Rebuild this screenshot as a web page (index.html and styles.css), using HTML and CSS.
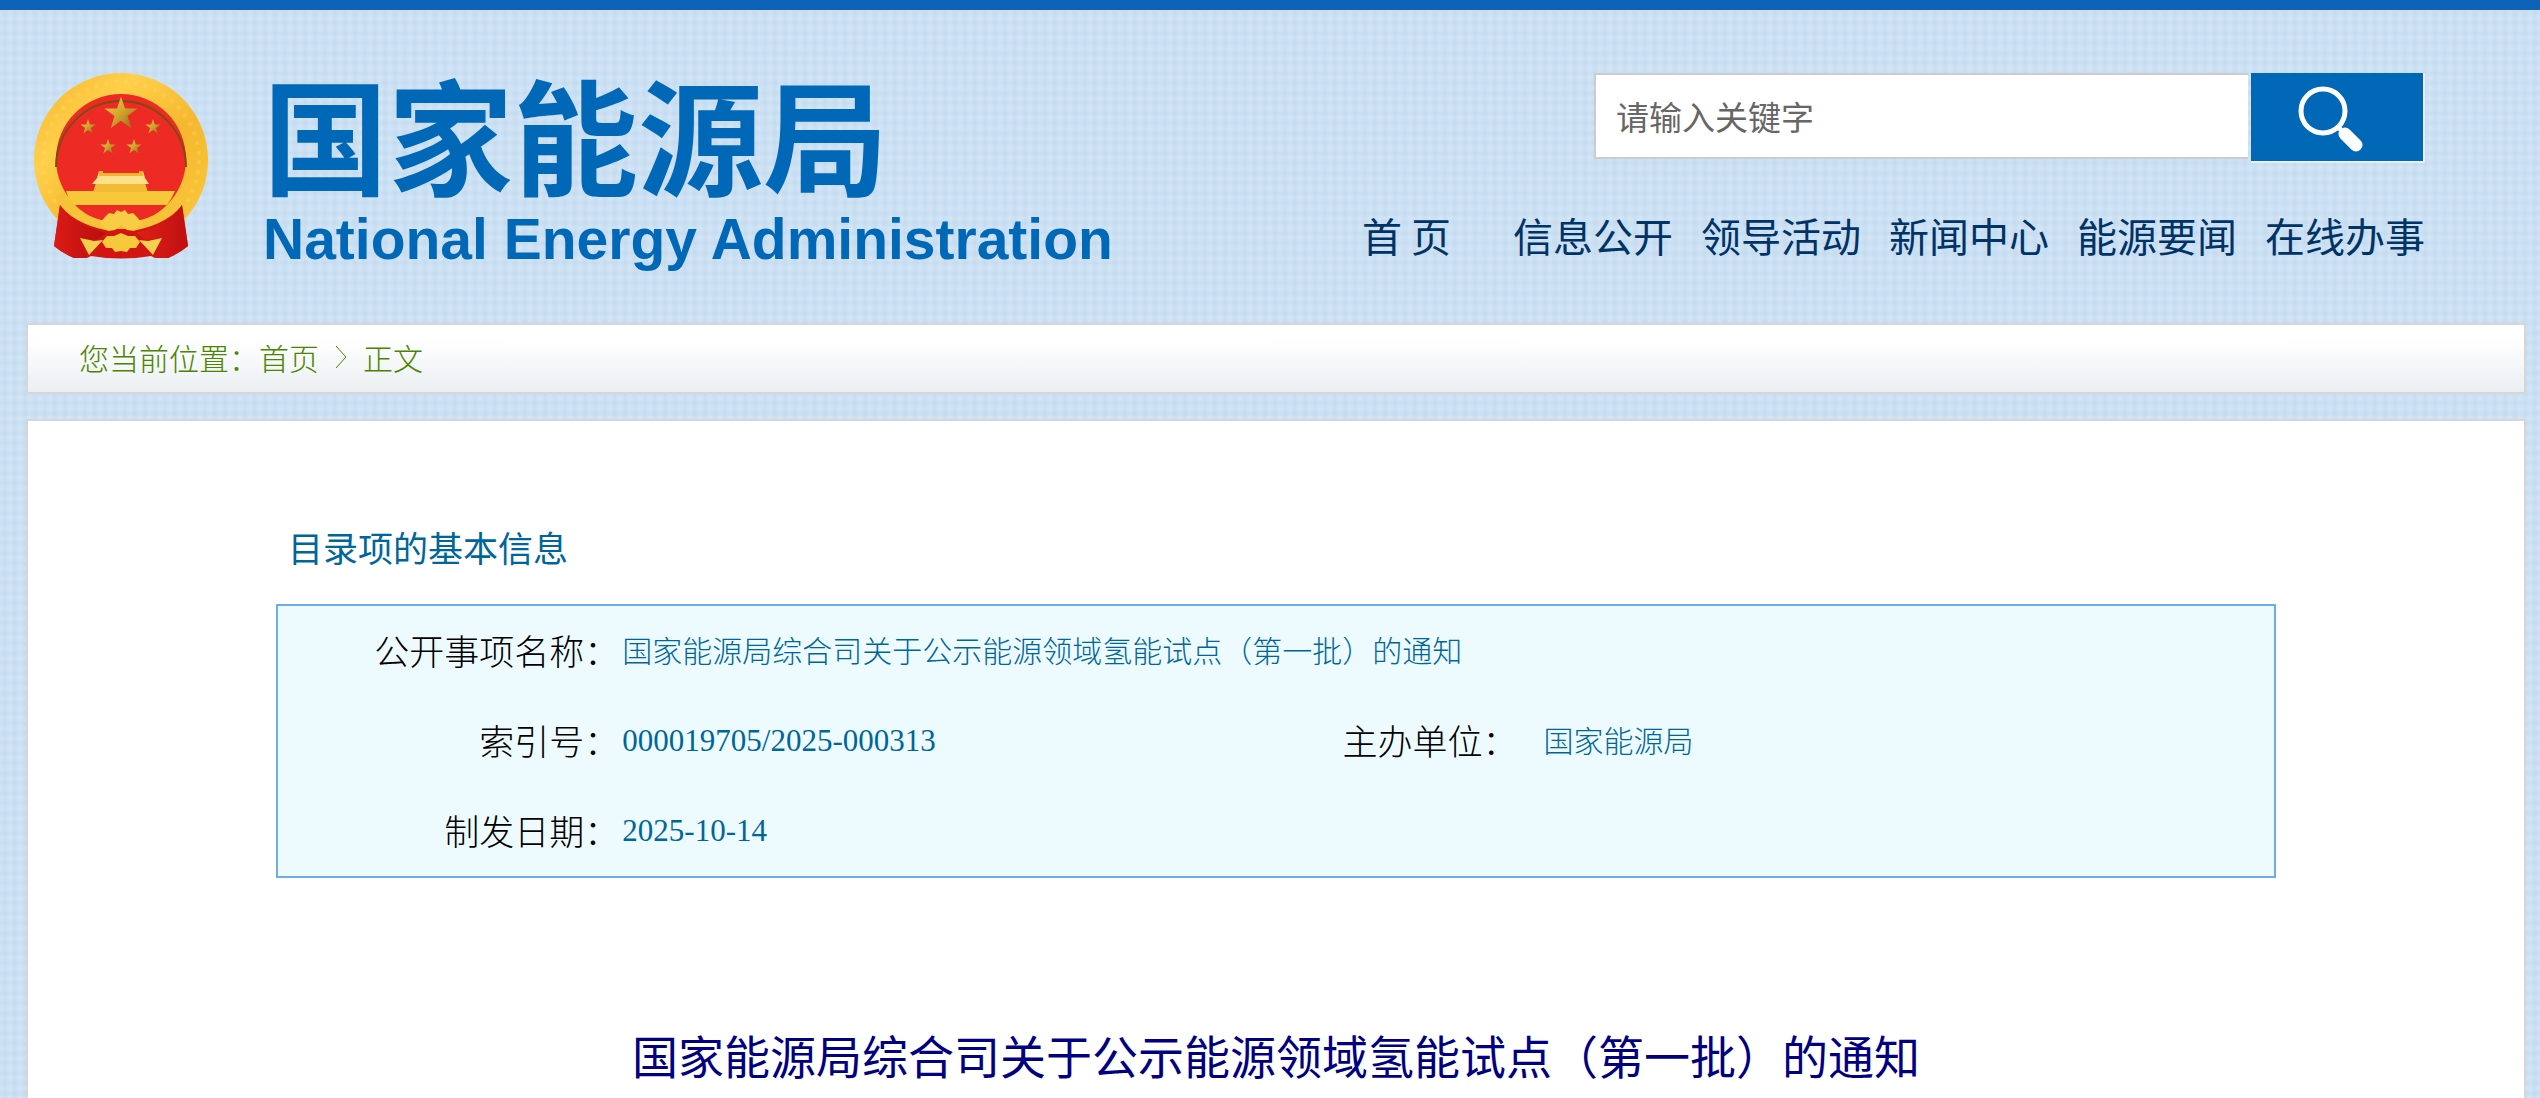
FILE: index.html
```html
<!DOCTYPE html>
<html lang="zh-CN">
<head>
  <meta charset="UTF-8">
  <title>国家能源局综合司关于公示能源领域氢能试点（第一批）的通知</title>
  <link rel="stylesheet" href="styles.css">
</head>
<body>
  <header class="header">
    <div class="brand">
      <svg class="emblem" viewBox="0 0 174 186" aria-hidden="true">
        <defs>
          <linearGradient id="gold" x1="0" y1="0" x2="1" y2="1">
            <stop offset="0" stop-color="#f7b52c"/>
            <stop offset="0.3" stop-color="#ffd04a"/>
            <stop offset="0.6" stop-color="#f5b82e"/>
            <stop offset="1" stop-color="#fbc93c"/>
          </linearGradient>
          <linearGradient id="star-fill" x1="0" y1="0" x2="1" y2="1">
            <stop offset="0" stop-color="#f0cc45"/>
            <stop offset="0.5" stop-color="#d3a52e"/>
            <stop offset="1" stop-color="#8a6414"/>
          </linearGradient>
          <linearGradient id="cloth" x1="0" y1="0" x2="1" y2="0">
            <stop offset="0" stop-color="#dc1a16"/>
            <stop offset="0.4" stop-color="#b50f0f"/>
            <stop offset="0.6" stop-color="#e02019"/>
            <stop offset="1" stop-color="#c01010"/>
          </linearGradient>
          <path id="star" d="M0-10 2.3-3.1 9.5-3.1 3.7 1.2 5.9 8.1 0 3.8-5.9 8.1-3.7 1.2-9.5-3.1-2.3-3.1Z" fill="url(#star-fill)"/>
        </defs>
        <path d="M87 0A87 87 0 0 1 150 147L87 160 24 147A87 87 0 0 1 87 0Z" fill="url(#gold)"/>
        <circle cx="87" cy="87" r="78" fill="none" stroke="#ffe27a" stroke-width="4" stroke-dasharray="4 6" opacity="0.25"/>
        <path d="M26 132Q44 156 87 156T148 132L154 173Q146 180 134 185H121L117 183Q87 188 57 183L53 185H40Q28 180 20 173Z" fill="#d31512"/>
        <circle cx="87" cy="86" r="65" fill="#ee2a24"/>
        <path d="M22 94A65 66 0 0 1 152 94" fill="none" stroke="#7d4d10" stroke-width="2"/>
        <path d="M32 118H141L137 126 133 132H40L35 126Z" fill="#f7c93a"/>
        <path d="M62 110H111L114 119H59Z" fill="#f3bb33"/>
        <path d="M65 98H69V100H105V98H109L111 105 115 111H58L63 105Z" fill="#ffe08a"/>
        <path d="M65 98H69V100H105V98H109V103H65Z" fill="#f2b42c"/>
        <use href="#star" transform="translate(87 41) scale(1.75)"/>
        <use href="#star" transform="translate(54 54) scale(.8)"/>
        <use href="#star" transform="translate(119 54) scale(.8)"/>
        <use href="#star" transform="translate(74 74) scale(.8)"/>
        <use href="#star" transform="translate(100 74) scale(.8)"/>
        <path d="M25 122Q40 147 74 153M149 122Q134 147 100 153" fill="none" stroke="#f6c338" stroke-width="9"/>
        <path d="M66 150 71 144 75 140 80 141 83 137 87 139 91 137 94 141 99 140 103 144 108 150 100 158 93 157 87 152 81 157 74 158Z" fill="#f8cd45"/>
        <path d="M26 132Q38 152 72 160L62 167 46 165 53 185H40Q28 180 20 173ZM148 132Q136 152 102 160L112 167 128 165 121 185H134Q146 180 154 173Z" fill="url(#cloth)"/>
        <path d="M46 165 60 168 69 167 55 182ZM128 165 114 168 105 167 119 182Z" fill="#f3d04e"/>
        <path d="M68 169 73 163 80 163 87 160 94 163 101 163 106 169 102 175 96 175 93 179 87 178 81 179 78 175 72 175Z" fill="#f6c93c"/>
      </svg>
      <div class="brand-text">
        <div class="brand-cn">国家能源局</div>
        <div class="brand-en">National Energy Administration</div>
      </div>
    </div>
    <div class="header-right">
      <form class="search">
        <input class="search-input" type="text" placeholder="请输入关键字" aria-label="请输入关键字">
        <button class="search-btn" type="button" aria-label="搜索">
          <svg class="search-icon" viewBox="0 0 66 66" aria-hidden="true">
            <circle cx="25" cy="25" r="22" fill="none" stroke="#fff" stroke-width="5"/>
            <path d="M39 40 46 47" stroke="#fff" stroke-width="5"/>
            <path d="M47 48 58 59" stroke="#fff" stroke-width="13" stroke-linecap="round"/>
          </svg>
        </button>
      </form>
      <nav class="nav">
        <a class="nav-home" href="#">首 页</a>
        <a href="#">信息公开</a>
        <a href="#">领导活动</a>
        <a href="#">新闻中心</a>
        <a href="#">能源要闻</a>
        <a href="#">在线办事</a>
      </nav>
    </div>
  </header>

  <div class="crumbs">
    <span>您当前位置：</span><a href="#">首页</a>
    <svg class="crumb-sep" viewBox="0 0 12 24" aria-hidden="true"><path d="M1 1 11 12 1 23" fill="none" stroke="#4d8500" stroke-width="1"/></svg>
    <span>正文</span>
  </div>

  <main class="content">
    <section class="info">
      <h2 class="info-title">目录项的基本信息</h2>
      <table class="info-table">
        <colgroup>
          <col class="col-label">
          <col class="col-value">
          <col class="col-unit">
          <col>
        </colgroup>
        <tr>
          <th scope="row">公开事项名称：</th>
          <td colspan="3">国家能源局综合司关于公示能源领域氢能试点（第一批）的通知</td>
        </tr>
        <tr>
          <th scope="row">索引号：</th>
          <td class="num">000019705/2025-000313</td>
          <th scope="row">主办单位：</th>
          <td class="unit-value">国家能源局</td>
        </tr>
        <tr>
          <th scope="row">制发日期：</th>
          <td class="num" colspan="3">2025-10-14</td>
        </tr>
      </table>
    </section>
    <h1 class="title">国家能源局综合司关于公示能源领域氢能试点（第一批）的通知</h1>
  </main>
</body>
</html>
```

FILE: styles.css
```css
* {
  box-sizing: border-box;
}
body {
  margin: 0;
  min-height: 100vh;
  display: flex;
  flex-direction: column;
  border-top: 10px solid #0d63b7;
  background-color: #d4e7f8;
  background-image:
    repeating-linear-gradient(90deg, transparent 0, rgba(150, 180, 210, 0.14) 5px, transparent 10px),
    repeating-linear-gradient(0deg, transparent 0, rgba(150, 180, 210, 0.14) 5px, transparent 10px);
  font-family: "Liberation Serif", "Noto Sans CJK SC", serif;
  font-size: 30px;
  font-weight: 300;
}
a {
  color: inherit;
  text-decoration: none;
}

/* header */
.header {
  display: flex;
  justify-content: space-between;
  height: 313px;
  padding: 63px 115px 0 34px;
}
.brand {
  display: flex;
  gap: 55px;
  color: #0068b7;
}
.emblem {
  width: 174px;
  height: 186px;
}
.brand-cn {
  margin-bottom: 16px;
  font: bold 125px/118px "Noto Sans CJK SC", sans-serif;
}
.brand-en {
  font: bold 57px/64px "Liberation Sans", sans-serif;
}
.header-right {
  display: flex;
  flex-direction: column;
  align-items: flex-end;
  gap: 42px;
}
.search {
  display: flex;
  gap: 3px;
}
.search-input {
  width: 654px;
  height: 86px;
  padding: 0 20px;
  border: 2px solid #ccc;
  border-right: 0;
  background: #fff;
  font: 33px "Noto Sans CJK SC", sans-serif;
}
.search-input::placeholder {
  color: #666;
}
.search-btn {
  display: flex;
  align-items: center;
  justify-content: center;
  width: 174px;
  height: 90px;
  padding: 4px 12px 0 0;
  border: 0;
  border-right: 2px solid #eee;
  border-bottom: 2px solid #eee;
  background: #0068b7;
}
.search-icon {
  width: 66px;
  height: 66px;
}
.nav {
  display: flex;
  gap: 28px;
  color: #036;
  font: 40px/60px "Noto Sans CJK SC", sans-serif;
}
.nav-home {
  margin-right: 34px;
}

/* breadcrumb */
.crumbs {
  display: flex;
  align-items: center;
  height: 71px;
  margin: 0 14px 25px 26px;
  padding: 0 0 4px 51px;
  border: 2px solid #d6d6d6;
  background: linear-gradient(#fff, #fff 20%, #ebeff3);
  color: #4d8500;
}
.crumb-sep {
  width: 12px;
  height: 24px;
  margin: 0 16px;
}

/* content */
.content {
  flex: 1;
  margin: 0 14px 0 26px;
  border: 2px solid #d6d6d6;
  border-bottom: 0;
  background: #fff;
}
.info {
  width: 2000px;
  max-width: 80.2%;
  margin: 0 auto;
}
.info-title {
  margin: 103px 0 27px 12px;
  color: #069;
  font-size: 35px;
  font-weight: 400;
  line-height: 53px;
}
.info-table {
  width: 100%;
  border: 2px solid #6fade9;
  border-spacing: 0;
  background: #edfbff;
  table-layout: fixed;
}
.col-label {
  width: 17.1%;
}
.col-value {
  width: 33%;
}
.col-unit {
  width: 12%;
}
.info-table th,
.info-table td {
  height: 90px;
  padding: 0 0 4px;
}
.info-table th {
  text-align: right;
  font-size: 35px;
  font-weight: 300;
}
.info-table td {
  padding-left: 3px;
  color: #069;
}
.info-table .num {
  padding-bottom: 0;
  font-size: 31px;
}
.info-table .unit-value {
  padding-left: 26px;
}
.title {
  margin: 146px 0 0;
  color: #000080;
  font-size: 46px;
  font-weight: 400;
  line-height: 70px;
  text-align: center;
}
```
